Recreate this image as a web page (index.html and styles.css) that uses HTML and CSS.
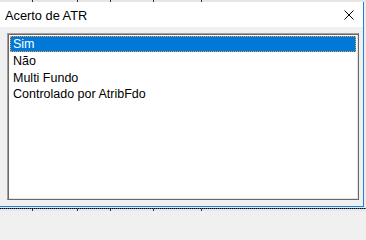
FILE: index.html
```html
<!DOCTYPE html>
<html>
<head>
<meta charset="utf-8">
<link rel="stylesheet" href="styles.css">
</head>
<body>
<div class="page">
  <div class="strip top">
    <span class="cell c1"></span><span class="cell c2"></span><span class="cell c3"></span><span class="cell c4"></span><span class="cell c5"></span><span class="cell c6"></span>
  </div>
  <div class="window">
    <div class="titlebar">
      <span class="title">Acerto de ATR</span>
      <span class="close" aria-label="Fechar">
        <svg width="10" height="10" viewBox="0 0 10 10"><path d="M0.5 0.5 L9.5 9.5 M9.5 0.5 L0.5 9.5" stroke="#000" stroke-width="1" fill="none"/></svg>
      </span>
    </div>
    <div class="body">
      <div class="listbox">
        <div class="item selected">Sim</div>
        <div class="item">Não</div>
        <div class="item">Multi Fundo</div>
        <div class="item">Controlado por AtribFdo</div>
      </div>
    </div>
  </div>
  <div class="gap"></div>
  <div class="dots"></div>
  <div class="strip bottom">
    <span class="cell c1"></span><span class="cell c2"></span><span class="cell c3"></span><span class="cell c4"></span><span class="cell c5"></span><span class="cell c6"></span>
  </div>
</div>
</body>
</html>
```

FILE: styles.css
```css
html, body {
  margin: 0;
  padding: 0;
  background: #f0f0f0;
}
.page {
  width: 366px;
  height: 211px;
  display: flex;
  flex-direction: column;
  overflow: hidden;
  background: #ececec;
}
.strip {
  display: flex;
  flex: none;
}
.strip.top {
  height: 2px;
  background: #e6e6e6;
}
.strip.bottom {
  height: 2px;
  background: #e8e8e8;
}
.cell {
  height: 100%;
  border-right: 1px solid #333;
  box-sizing: border-box;
}
.c1 { width: 33px; }
.c2 { width: 45px; }
.c3 { width: 33px; }
.c4 { width: 43px; }
.c5 { width: 48px; }
.c6 { flex: 1; border-right: none; }
.window {
  width: 364px;
  height: 205px;
  flex: none;
  display: flex;
  flex-direction: column;
  border-right: 1px solid #1883d7;
  border-bottom: 1px solid #1883d7;
  box-sizing: border-box;
  background: #f0f0f0;
}
.titlebar {
  height: 25px;
  flex: none;
  background: #ffffff;
  display: flex;
  align-items: center;
  justify-content: space-between;
  padding: 0 9px 0 5px;
  font-family: "Liberation Sans", Arial, sans-serif;
  font-size: 12.8px;
  color: #000;
}
.title {
  line-height: 15px;
  padding-top: 1px;
}
.close {
  width: 10px;
  height: 10px;
  display: flex;
  margin-top: 1px;
}
.body {
  flex: 1;
  padding: 6px 5px 0 7px;
  background: #f0f0f0;
}
.listbox {
  width: 352px;
  height: 167px;
  box-sizing: border-box;
  background: #fff;
  border: 1px solid;
  border-color: #a0a0a0 #696969 #696969 #a0a0a0;
  box-shadow: inset 1px 1px 0 #696969, inset -1px -1px 0 #e3e3e3;
  padding: 2px;
  font-family: "Liberation Sans", Arial, sans-serif;
  font-size: 12.5px;
  color: #000;
}
.item {
  height: 16px;
  line-height: 16px;
  padding-left: 2px;
  border: 1px solid transparent;
  box-sizing: border-box;
  white-space: nowrap;
}
.item + .item {
  height: 16.5px;
  line-height: 16.5px;
}
.item.selected {
  background: #0078d7;
  color: #fff;
  border: 1px dotted #f0a040;
  line-height: 14px;
}
.gap {
  height: 1px;
  flex: none;
  background: #ececec;
}
.dots {
  height: 1px;
  flex: none;
  background: repeating-linear-gradient(90deg, #000 0 1px, #3a6fb0 1px 2px);
}
```
